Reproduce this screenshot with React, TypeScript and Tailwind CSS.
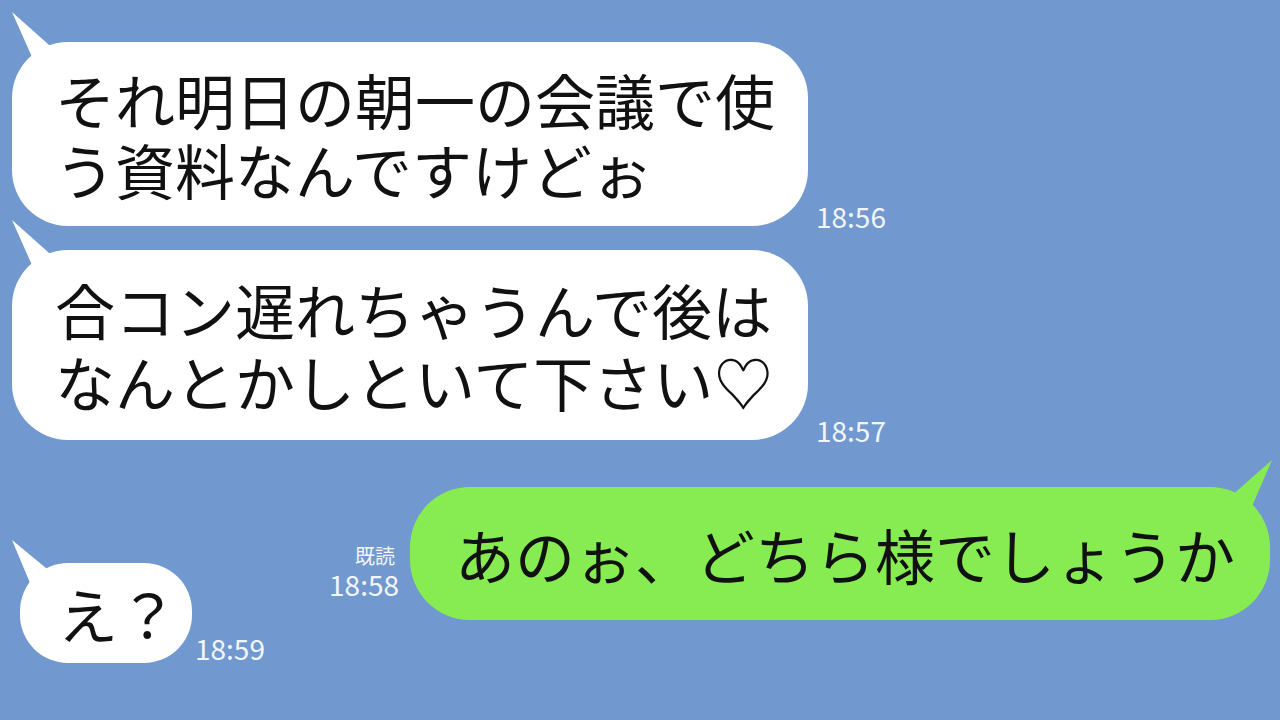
import React from 'react';

const Tail = ({ side, color }: { side: 'left' | 'right'; color: string }) =>
  side === 'left' ? (
    <svg className="absolute left-0 top-[-30px]" width="50" height="60" viewBox="0 0 50 60">
      <polygon points="0,0 45,40 24,54" fill={color} />
    </svg>
  ) : (
    <svg className="absolute right-[-2px] top-[-27px]" width="44" height="54" viewBox="0 0 44 54">
      <polygon points="44,0 2,37 22,51" fill={color} />
    </svg>
  );

const Time = ({ t, className = '' }: { t: string; className?: string }) => (
  <div className={`text-[28px] leading-[28px] text-[#f2f6fb] ${className}`}>{t}</div>
);

const App = () => {
  return (
    <div
      className="w-[1280px] h-[720px] bg-[#7199cf] overflow-hidden flex flex-col pt-[42px] text-[#111]"
      style={{ fontFamily: '"Noto Sans CJK JP", "Noto Sans", sans-serif' }}
    >
      {/* message 1 */}
      <div className="flex items-end pl-[12px]">
        <div className="relative w-[796px] h-[184px] rounded-[56px] bg-white flex flex-col justify-center pl-[43px] text-[60px] leading-[70px] whitespace-nowrap">
          <Tail side="left" color="#ffffff" />
          <div className="relative">それ明日の朝一の会議で使</div>
          <div className="relative">う資料なんですけどぉ</div>
        </div>
        <Time t="18:56" className="ml-[8px] -mb-1" />
      </div>

      {/* message 2 */}
      <div className="flex items-end pl-[12px] mt-[24px]">
        <div className="relative w-[796px] h-[190px] rounded-[56px] bg-white flex flex-col justify-center pl-[43px] text-[60px] leading-[72px] whitespace-nowrap">
          <Tail side="left" color="#ffffff" />
          <div className="relative">合コン遅れちゃうんで後は</div>
          <div className="relative">なんとかしといて下さい♡</div>
        </div>
        <Time t="18:57" className="ml-[8px] -mb-1" />
      </div>

      {/* my reply */}
      <div className="flex items-end justify-end pr-[10px] mt-[47px]">
        <div className="flex flex-col items-end mr-[11px] mb-[22px] gap-[4px]">
          <div className="text-[20px] leading-[20px] text-[#f2f6fb] mr-[4px]">既読</div>
          <Time t="18:58" />
        </div>
        <div className="relative w-[860px] h-[133px] rounded-[60px] bg-[#87ec52] flex items-center pl-[45px] text-[60px] leading-[70px] whitespace-nowrap">
          <Tail side="right" color="#87ec52" />
          <span className="relative">あのぉ、どちら様でしょうか</span>
        </div>
      </div>

      {/* message 4 */}
      <div className="flex items-end pl-[20px] mt-[-57px]">
        <div className="relative w-[172px] h-[100px] rounded-[48px] bg-white flex items-center pl-[38px] text-[60px] leading-[70px] whitespace-nowrap">
          <svg className="absolute left-[-8px] top-[-23px]" width="44" height="54" viewBox="0 0 44 54">
            <polygon points="0,0 40,33 21,50" fill="#ffffff" />
          </svg>
          <span className="relative">え？</span>
        </div>
        <Time t="18:59" className="ml-[3px] mb-[1px]" />
      </div>
    </div>
  );
};

export default App;
